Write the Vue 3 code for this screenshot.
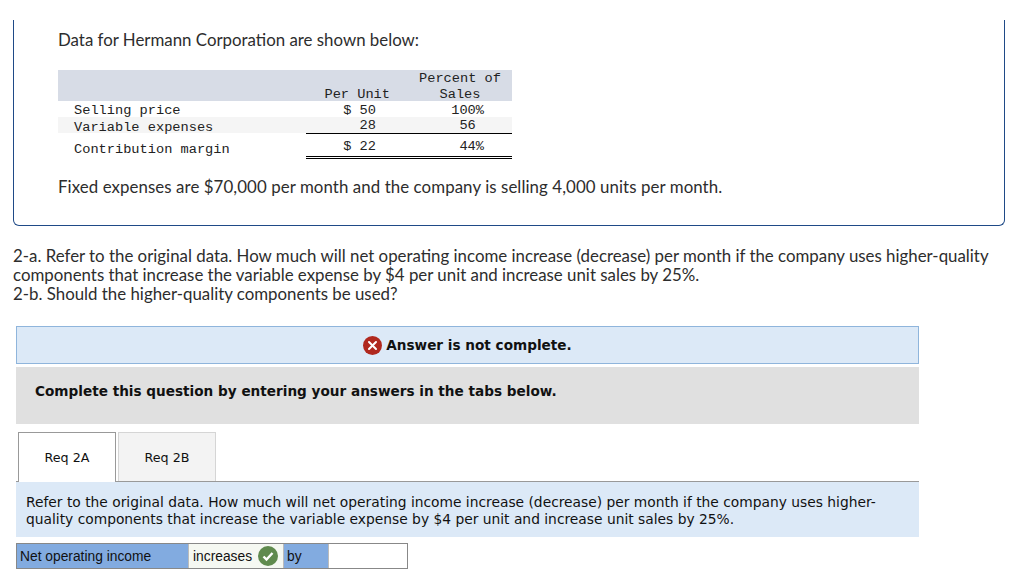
<script setup>
const rows = [
  { label: 'Selling price', unit: '$ 50', pct: '100%', cls: 'r1' },
  { label: 'Variable expenses', unit: '28', pct: '56\u00a0', cls: 'r2' },
  { label: 'Contribution margin', unit: '$ 22', pct: '44%', cls: 'r3' }
];
</script>

<template>
  <div class="page">
    <div class="card">
      <p class="lead">Data for Hermann Corporation are shown below:</p>
      <div class="data">
        <div class="row head">
          <div class="label"></div>
          <div class="unit">Per Unit</div>
          <div class="pct">Percent of<br>Sales</div>
        </div>
        <div v-for="r in rows" :key="r.label" class="row" :class="r.cls">
          <div class="label">{{ r.label }}</div>
          <div class="unit">{{ r.unit }}</div>
          <div class="pct">{{ r.pct }}</div>
        </div>
      </div>
      <p class="fixed">Fixed expenses are $70,000 per month and the company is selling 4,000 units per month.</p>
    </div>

    <p class="question">
      2-a. Refer to the original data. How much will net operating income increase (decrease) per month if the company uses higher-quality components that increase the variable expense by $4 per unit and increase unit sales by 25%.<br>
      2-b. Should the higher-quality components be used?
    </p>

    <div class="main">
      <div class="notice">
        <svg class="x-icon" width="19" height="19" viewBox="0 0 19 19">
          <circle cx="9.5" cy="9.5" r="9.5" fill="#b0281e" />
          <path d="M6 6l7 7M13 6l-7 7" stroke="#fff" stroke-width="2" stroke-linecap="round" />
        </svg>
        <span>Answer is not complete.</span>
      </div>
      <div class="instruct">Complete this question by entering your answers in the tabs below.</div>
      <div class="tabs">
        <div class="tab active">Req 2A</div>
        <div class="tab">Req 2B</div>
      </div>
      <div class="prompt">Refer to the original data. How much will net operating income increase (decrease) per month if the company uses higher-quality components that increase the variable expense by $4 per unit and increase unit sales by 25%.</div>
      <div class="answer">
        <div class="cell blue name">Net operating income</div>
        <div class="cell pick">increases
          <svg width="20" height="20" viewBox="0 0 20 20">
            <circle cx="10" cy="10" r="10" fill="#5f8a4e" />
            <path d="M5.5 10.5l3 3 6-6.5" fill="none" stroke="#fff" stroke-width="2.4" />
          </svg>
        </div>
        <div class="cell blue by">by</div>
        <div class="cell input"></div>
      </div>
    </div>
  </div>
</template>

<style>
html, body {
  margin: 0;
  background: #fff;
}
</style>

<style scoped>
.page {
  width: 1024px;
  height: 573px;
  overflow: hidden;
  padding-top: 20px;
  box-sizing: border-box;
  color: #2d2d2d;
  font-family: Lato, "Open Sans", sans-serif;
  font-size: 16.85px;
}
.card {
  margin: 0 19px 0 13px;
  height: 206px;
  box-sizing: border-box;
  border: 1.5px solid #1f4a87;
  border-top: none;
  border-radius: 0 0 6px 6px;
  padding: 10px 0 0 44px;
}
.lead, .fixed {
  margin: 0;
  line-height: 20px;
}
.data {
  margin-top: 20px;
  width: 454px;
  font-family: "Liberation Mono", monospace;
  font-size: 13.67px;
  color: #222;
}
.row {
  display: grid;
  grid-template-columns: 248px 102px 104px;
  height: 16px;
  line-height: 16px;
}
.row .label {
  padding-left: 16px;
  padding-top: 2px;
}
.row .unit, .row .pct {
  text-align: right;
  padding-top: 2px;
  box-sizing: border-box;
}
.row .unit {
  padding-right: 32px;
}
.row .pct {
  padding-right: 28px;
}
.row.head {
  height: 31px;
  background: #d7dce6;
}
.row.head .unit {
  padding: 17px 18px 0 0;
}
.row.head .pct {
  padding: 1px 0 0 0;
  text-align: center;
}
.row.r2 {
  background: #f5f5f5;
}
.row.r2 .label {
  padding-top: 3px;
}
.row.r2 .unit, .row.r2 .pct {
  padding-top: 1px;
  border-bottom: 1px solid #000;
  height: 17px;
}
.row.r3 {
  height: 26px;
}
.row.r3 .label {
  padding-top: 9px;
}
.row.r3 .unit, .row.r3 .pct {
  padding-top: 6px;
  height: 26px;
  border-bottom: 3px double #000;
}
.fixed {
  margin-top: 18px;
  letter-spacing: 0.08px;
}
.question {
  margin: 20px 30px 0 13px;
  line-height: 19px;
}
.main {
  width: 903px;
  margin: 23px 0 0 16px;
}
.notice {
  height: 38px;
  box-sizing: border-box;
  background: #dce9f7;
  border: 1px solid #8fb5dc;
  display: flex;
  align-items: center;
  justify-content: center;
  gap: 4px;
  font-family: "DejaVu Sans", sans-serif;
  font-weight: bold;
  font-size: 13.62px;
  color: #111;
}
.instruct {
  margin-top: 3px;
  height: 57px;
  background: #e0e0e0;
  padding-left: 19px;
  line-height: 48px;
  font-family: "DejaVu Sans", sans-serif;
  font-weight: bold;
  font-size: 13.62px;
  color: #111;
}
.tabs {
  display: flex;
  gap: 2px;
  margin-top: 8px;
  padding-left: 2px;
  height: 50px;
  box-sizing: border-box;
  border-bottom: 1px solid #999;
}
.tab {
  width: 98px;
  box-sizing: border-box;
  border: 1px solid #d5d5d5;
  border-bottom: none;
  background: #f3f3f3;
  text-align: center;
  line-height: 50px;
  font-family: "DejaVu Sans", sans-serif;
  font-size: 12.7px;
  color: #111;
}
.tab.active {
  height: 50px;
  background: #fff;
  border-color: #999;
}
.prompt {
  background: #dce9f7;
  height: 55px;
  box-sizing: border-box;
  padding: 12px 30px 0 10px;
  line-height: 17px;
  font-family: "DejaVu Sans", sans-serif;
  font-size: 13.82px;
  color: #111;
}
.answer {
  display: flex;
  margin-top: 6px;
  width: 392px;
  height: 26px;
  box-sizing: border-box;
  border: 1px solid #888;
  font-family: "Liberation Sans", sans-serif;
  font-size: 13.8px;
  color: #111;
}
.cell {
  display: flex;
  align-items: center;
  box-sizing: border-box;
  padding: 1px 0 0 3px;
}
.blue {
  background: #82abe0;
}
.name {
  width: 172px;
  border-right: 1px solid #bbb;
}
.pick {
  width: 95px;
  gap: 6px;
  padding-left: 4px;
  background: #f5f8f2;
  border-right: 1px solid #bbb;
}
.pick svg {
  margin-top: -1px;
}
.by {
  width: 45px;
  padding-left: 3px;
  border-right: 1px solid #bbb;
}
.input {
  flex: 1;
  background: #fff;
}
</style>
